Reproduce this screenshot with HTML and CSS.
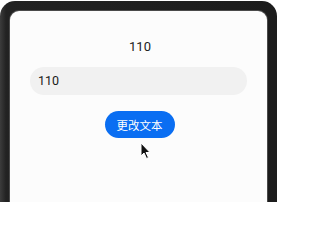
FILE: index.html
```html
<!DOCTYPE html>
<html lang="zh">
<head>
<meta charset="utf-8">
<link rel="stylesheet" href="styles.css">
</head>
<body>
<div class="device">
  <div class="screen">
    <div class="title">110</div>
    <div class="field">110</div>
    <div class="btn-row"><button class="btn">更改文本</button></div>
  </div>
</div>
<svg class="cursor" width="12" height="18" viewBox="0 0 12 18">
  <path d="M1 1 L1 14 L4 11 L6.5 16.5 L8.5 15.5 L6 10.5 L10 10.5 Z" fill="#111" stroke="#fff" stroke-width="1" stroke-linejoin="round"/>
</svg>
</body>
</html>
```
FILE: styles.css
```css
html, body {
  margin: 0;
  padding: 0;
  background: #ffffff;
  font-family: Roboto, "Noto Sans", "Noto Sans CJK SC", sans-serif;
}
body {
  height: 202px;
}
.device {
  margin-top: 1px;
  width: 277px;
  height: 250px;
  box-sizing: border-box;
  padding: 10px 10px 0 10px;
  background: linear-gradient(to right, #3c3c3c 0, #222 6px, #1c1c1c 100%);
  border-radius: 15px 15px 0 0;
}
.screen {
  height: 100%;
  background: #fcfcfc;
  border-radius: 9px 9px 0 0;
  box-shadow: 0 0 0 1px #4a4a4a;
  padding-top: 28px;
  box-sizing: border-box;
}
.title {
  font-size: 13px;
  line-height: 16px;
  color: #222;
  text-align: center;
  padding-left: 3px;
}
.field {
  margin: 12px 20px 0 20px;
  height: 28px;
  border-radius: 14px;
  background: #f1f1f1;
  font-size: 12.5px;
  line-height: 28px;
  color: #1a1a1a;
  padding-left: 8px;
}
.btn-row {
  display: flex;
  justify-content: center;
  margin-top: 16px;
  padding-left: 2px;
}
.btn {
  width: 70px;
  height: 27px;
  border: none;
  border-radius: 14px;
  background: #0a6ef2;
  color: #fff;
  font-family: "Noto Sans CJK SC", sans-serif;
  font-size: 11.5px;
  padding: 0;
}
.cursor {
  position: absolute;
  left: 140px;
  top: 142px;
}
```
